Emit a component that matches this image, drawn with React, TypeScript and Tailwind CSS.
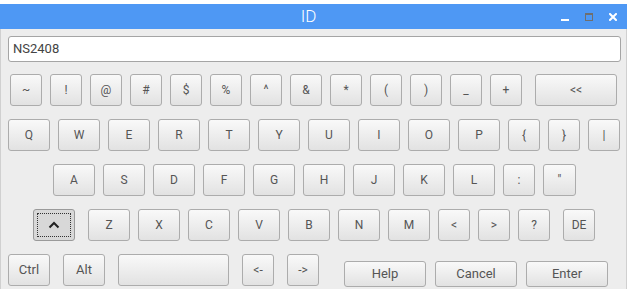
import type { ReactNode } from 'react';

type KeyProps = {
  label?: ReactNode;
  w: string;
  h?: string;
  pressed?: boolean;
  className?: string;
};

function Key({ label, w, h = 'h-[32px]', pressed, className = '' }: KeyProps) {
  if (pressed) {
    return (
      <div className={`${w} ${h} ${className} shrink-0 rounded-[3px] border border-[#9a9a9a] bg-[#d8d8d8] p-[3px]`}>
        <div className="w-full h-full border border-dotted border-[#333] flex items-center justify-center text-[#333]">
          {label}
        </div>
      </div>
    );
  }
  return (
    <div
      className={`${w} ${h} ${className} shrink-0 rounded-[3px] border border-[#acacac] bg-linear-to-b from-[#f9f9f9] to-[#e2e2e2] flex items-center justify-center text-[12px] text-[#555]`}
    >
      {label}
    </div>
  );
}

const row1 = ['~', '!', '@', '#', '$', '%', '^', '&', '*', '(', ')', '_', '+'];
const row2 = ['Q', 'W', 'E', 'R', 'T', 'Y', 'U', 'I', 'O', 'P'];
const row3 = ['A', 'S', 'D', 'F', 'G', 'H', 'J', 'K', 'L'];
const row4 = ['Z', 'X', 'C', 'V', 'B', 'N', 'M'];

export default function App() {
  return (
    <div className="w-[627px] h-[293px] bg-white font-['Roboto','Liberation_Sans',sans-serif] overflow-hidden">
      <div className="h-[4px]" />
      {/* Title bar */}
      <div className="h-[25px] bg-[#4e98f4] flex items-center">
        <div className="flex-1" />
        <div className="text-white text-[17px] font-light leading-none">ID</div>
        <div className="flex-1 flex justify-end items-center pr-[10px] gap-[16px]">
          <div className="w-[8px] h-[8px] flex items-end">
            <div className="w-[8px] h-[2px] bg-white" />
          </div>
          <div className="w-[8px] h-[8px] border border-t-2 border-[#6f6f6f]" />
          <svg width="8" height="8" viewBox="0 0 8 8">
            <path d="M1 1 L7 7 M7 1 L1 7" stroke="white" strokeWidth="2" strokeLinecap="square" />
          </svg>
        </div>
      </div>

      {/* Window body */}
      <div className="h-[260px] bg-[#ededed] border-x border-[#d0d0d0] pt-[7px]">
        <div className="ml-[7px] mr-[5px] h-[26px] rounded-[3px] border border-[#a5a5a5] bg-white flex items-center px-[4px] text-[13px] text-[#444]">
          NS2408
        </div>

        <div className="mt-[12px] flex flex-col gap-[13px]">
          {/* Row 1 */}
          <div className="flex pl-[9px]">
            <div className="flex gap-[8px]">
              {row1.map(k => (
                <Key key={k} label={k} w="w-[32px]" />
              ))}
            </div>
            <Key label="<<" w="w-[82px]" className="ml-[13px]" />
          </div>

          {/* Row 2 */}
          <div className="flex pl-[7px] gap-[8px]">
            {row2.map(k => (
              <Key key={k} label={k} w="w-[42px]" />
            ))}
            <Key label="{" w="w-[32px]" />
            <Key label="}" w="w-[32px]" />
            <Key label="|" w="w-[32px]" />
          </div>

          {/* Row 3 */}
          <div className="flex pl-[52px] gap-[8px]">
            {row3.map(k => (
              <Key key={k} label={k} w="w-[42px]" />
            ))}
            <Key label=":" w="w-[32px]" />
            <Key label={'"'} w="w-[33px]" />
          </div>

          {/* Row 4 */}
          <div className="flex pl-[32px]">
            <Key
              pressed
              w="w-[42px]"
              label={
                <svg width="12" height="8" viewBox="0 0 12 8">
                  <path d="M1.5 6.5 L6 2 L10.5 6.5" fill="none" stroke="#222" strokeWidth="2" />
                </svg>
              }
            />
            <div className="flex gap-[8px] ml-[13px]">
              {row4.map(k => (
                <Key key={k} label={k} w="w-[42px]" />
              ))}
              <Key label="<" w="w-[32px]" />
              <Key label=">" w="w-[32px]" />
              <Key label="?" w="w-[32px]" />
            </div>
            <Key label="DE" w="w-[32px]" className="ml-[13px]" />
          </div>

          {/* Row 5 */}
          <div className="flex pl-[7px]">
            <Key label="Ctrl" w="w-[42px]" className="text-[13px]" />
            <Key label="Alt" w="w-[42px]" className="ml-[13px] text-[13px]" />
            <Key w="w-[111px]" className="ml-[13px]" />
            <Key label="<-" w="w-[32px]" className="ml-[13px]" />
            <Key label="->" w="w-[32px]" className="ml-[13px]" />
            <div className="flex gap-[9px] ml-[25px] mt-[7px]">
              <Key label="Help" w="w-[82px]" h="h-[26px]" className="text-[13px]" />
              <Key label="Cancel" w="w-[82px]" h="h-[26px]" className="text-[13px]" />
              <Key label="Enter" w="w-[82px]" h="h-[26px]" className="text-[13px]" />
            </div>
          </div>
        </div>
      </div>
    </div>
  );
}
